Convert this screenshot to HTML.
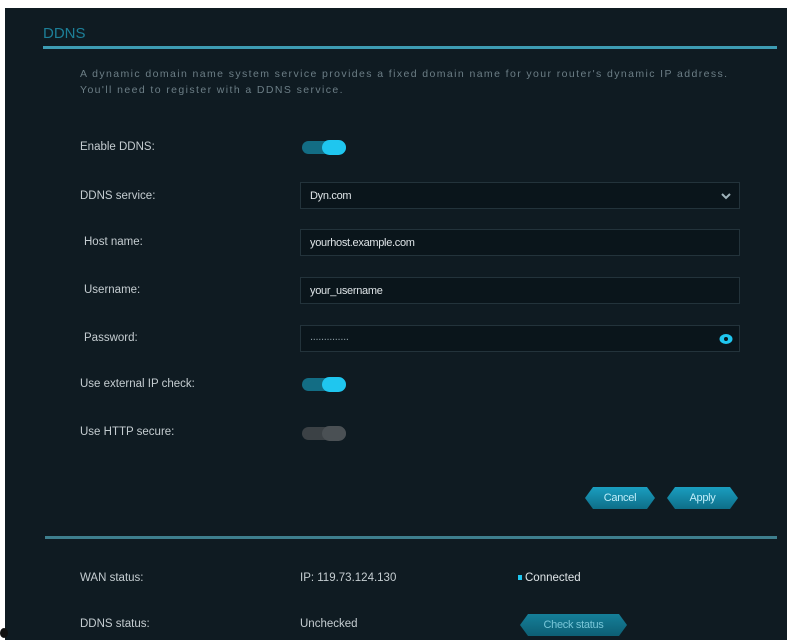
<!DOCTYPE html>
<html><head><style>
body{margin:0;width:787px;height:640px;background:#fff;position:relative;overflow:hidden;font-family:"Liberation Sans",sans-serif;}
#p{position:absolute;left:5px;top:8px;width:782px;height:632px;background:#0f1b22;}
.t{position:absolute;color:#c5cdd1;font-size:11.5px;white-space:nowrap;letter-spacing:0px}
.box{position:absolute;left:300px;width:440px;height:27px;background:#0a151b;border:1px solid #23333b;box-sizing:border-box}
.box span{position:absolute;left:9px;top:7px;color:#dfe5e8;font-size:11px;letter-spacing:-0.3px}
.tog{position:absolute;left:302px;width:44px;height:13px;border-radius:7px;background:#136d84}
.tog i{position:absolute;right:0;top:-1px;width:24px;height:15px;border-radius:8px;background:#1fc6ef}
.btn{position:absolute;height:22px;background:linear-gradient(#1a9ec0,#0e6e88);color:#bfeefa;font-size:11px;text-align:center;line-height:22px;clip-path:polygon(8px 0,calc(100% - 8px) 0,100% 50%,calc(100% - 8px) 100%,8px 100%,0 50%);letter-spacing:-0.3px}
.ln{position:absolute;height:3px;background:#3d9cb3}
</style></head><body>
<div id="p"></div>
<div class="t" style="left:43px;top:25px;font-size:15px;color:#1d7f98">DDNS</div>
<div class="ln" style="left:43px;top:46px;width:734px"></div>
<div class="t" style="left:80px;top:68px;color:#6c7e86;font-size:10.5px;letter-spacing:1.4px">A dynamic domain name system service provides a fixed domain name for your router's dynamic IP address.</div>
<div class="t" style="left:80px;top:84px;color:#6c7e86;font-size:10.5px;letter-spacing:1.4px">You'll need to register with a DDNS service.</div>
<div class="t" style="left:80px;top:141px">Enable DDNS:</div>
<div class="tog" style="top:141px"><i></i></div>
<div class="t" style="left:80px;top:190px">DDNS service:</div>
<div class="box" style="top:182px"><span>Dyn.com</span><svg style="position:absolute;right:8px;top:10px" width="10" height="7"><path d="M1 1l4 4 4-4" stroke="#9fb3bb" stroke-width="2" fill="none"/></svg></div>
<div class="t" style="left:84px;top:236px">Host name:</div>
<div class="box" style="top:229px"><span>yourhost.example.com</span></div>
<div class="t" style="left:84px;top:284px">Username:</div>
<div class="box" style="top:277px"><span>your_username</span></div>
<div class="t" style="left:84px;top:332px">Password:</div>
<div class="box" style="top:325px"><span style="top:5px;color:#8a9aa1">..............</span><svg style="position:absolute;right:6px;top:7px" width="14" height="12"><ellipse cx="7" cy="6" rx="6.5" ry="5" fill="#1fc6ef"/><circle cx="7" cy="6" r="2" fill="#0a151b"/></svg></div>
<div class="t" style="left:80px;top:378px">Use external IP check:</div>
<div class="tog" style="top:378px"><i></i></div>
<div class="t" style="left:80px;top:426px">Use HTTP secure:</div>
<div class="tog" style="top:427px;background:#3b4145"><i style="background:#4a5054;right:0"></i></div>
<div class="btn" style="left:585px;top:487px;width:70px">Cancel</div>
<div class="btn" style="left:667px;top:487px;width:71px">Apply</div>
<div class="ln" style="left:45px;top:536px;width:732px;background:#3e7f8e"></div>
<div class="t" style="left:80px;top:572px">WAN status:</div>
<div class="t" style="left:300px;top:572px">IP: 119.73.124.130</div>
<div class="t" style="left:518px;top:572px;color:#dfe5e8"><span style="display:inline-block;width:4px;height:5px;background:#1fc6ef;margin-right:3px;vertical-align:1px"></span>Connected</div>
<div class="t" style="left:80px;top:618px">DDNS status:</div>
<div class="t" style="left:300px;top:618px">Unchecked</div>
<div class="btn" style="left:520px;top:614px;width:107px;background:linear-gradient(#157f99,#0d5f74);color:#78c6d8">Check status</div>
<div style="position:absolute;left:0;top:628px;width:8px;height:10px;border-radius:50%;background:#111"></div>
</body></html>
